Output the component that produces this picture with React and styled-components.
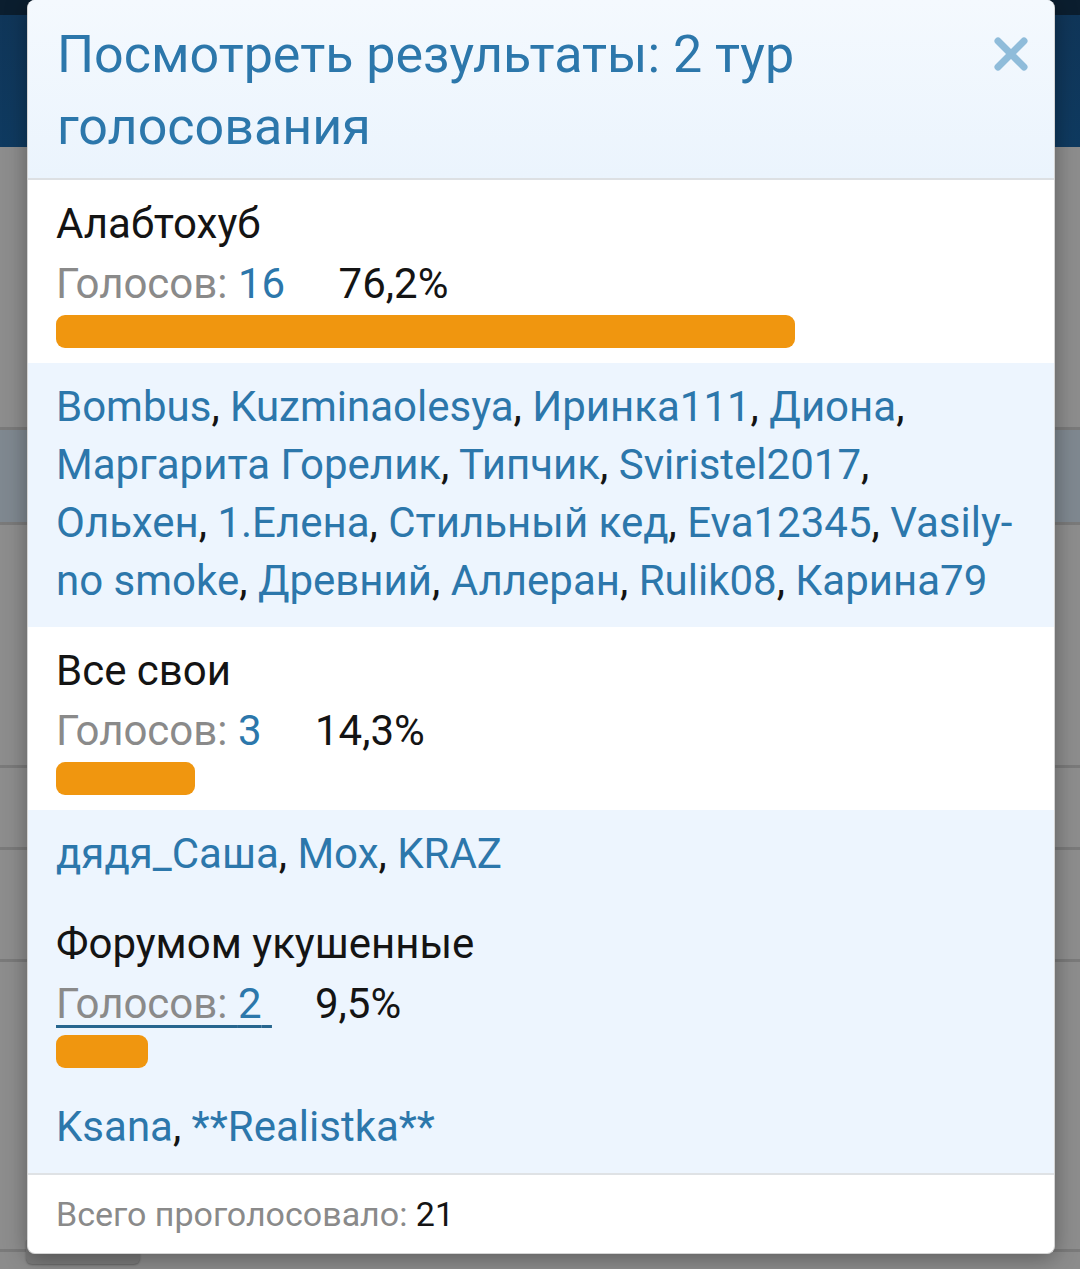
import React from 'react'
import styled, { createGlobalStyle } from 'styled-components'

const GlobalStyle = createGlobalStyle`
  html, body {
    margin: 0;
    padding: 0;
  }
  body {
    font-family: Roboto, "Noto Sans", "Liberation Sans", sans-serif;
    background: #8c8c8c;
  }
`

const options = [
  {
    title: 'Алабтохуб',
    votes: 16,
    percent: '76,2%',
    share: 76.2,
    voters: ['Bombus', 'Kuzminaolesya', 'Иринка111', 'Диона', 'Маргарита Горелик', 'Типчик', 'Sviristel2017',
      'Ольхен', '1.Елена', 'Стильный кед', 'Eva12345', 'Vasily-no smoke', 'Древний', 'Аллеран', 'Rulik08', 'Карина79'],
  },
  {
    title: 'Все свои',
    votes: 3,
    percent: '14,3%',
    share: 14.3,
    voters: ['дядя_Саша', 'Mox', 'KRAZ'],
  },
  {
    title: 'Форумом укушенные',
    votes: 2,
    percent: '9,5%',
    share: 9.5,
    voters: ['Ksana', '**Realistka**'],
    hover: true,
  },
]

export default function App() {
  return (
    <>
      <GlobalStyle />
      <Page>
        <TopBar />
        <BgRow $h={283} />
        <BgRow $h={95} $tone="#7f8890" />
        <BgRow $h={243} />
        <BgRow $h={82} />
        <BgRow $h={112} />
        <BgRow $h={290} />
        <BgButton />

        <Modal>
          <Header>
            <Title>Посмотреть результаты: 2 тур голосования</Title>
            <Close aria-label="close">
              <svg width="34" height="34" viewBox="0 0 34 34">
                <path d="M4 4 L30 30 M30 4 L4 30" stroke="#8fbcda" strokeWidth="7" strokeLinecap="round" />
              </svg>
            </Close>
          </Header>

          {options.map((o) => (
            <React.Fragment key={o.title}>
              <Option $tinted={o.hover}>
                <OptionTitle>{o.title}</OptionTitle>
                <VotesLine>
                  <Votes $hover={o.hover}>Голосов: <Count>{o.votes}</Count> </Votes>
                  <Percent>{o.percent}</Percent>
                </VotesLine>
                <Bar style={{ width: `${o.share}%` }} />
              </Option>
              <Voters>
                {o.voters.map((v, i) => (
                  <React.Fragment key={v}>
                    <Voter>{v}</Voter>
                    {i < o.voters.length - 1 ? ', ' : ''}
                  </React.Fragment>
                ))}
              </Voters>
            </React.Fragment>
          ))}

          <Footer>
            Всего проголосовало: <Total>21</Total>
          </Footer>
        </Modal>
      </Page>
    </>
  )
}

const Page = styled.div`
  position: relative;
  height: 1269px;
  overflow: hidden;
  display: flex;
  flex-direction: column;
`

const TopBar = styled.div`
  height: 147px;
  flex-shrink: 0;
  background: linear-gradient(#0b1e2f 0 15px, #103659 15px, #0f3a60 147px);
`

const BgRow = styled.div`
  height: ${(p) => p.$h}px;
  flex-shrink: 0;
  background: ${(p) => p.$tone || '#8d8d8d'};
  border-bottom: 3px solid #7a7a7a;
  box-sizing: border-box;
`

const BgButton = styled.div`
  position: absolute;
  left: 26px;
  top: 1240px;
  width: 114px;
  height: 24px;
  border-radius: 0 0 6px 6px;
  background: #7a7a7a;
  box-shadow: 0 1px 2px rgba(0, 0, 0, 0.3);
`

const Modal = styled.div`
  position: absolute;
  left: 27px;
  top: 0;
  width: 1028px;
  background: #fff;
  border: 1px solid #d4d4d4;
  border-top: none;
  border-radius: 8px;
  box-shadow: 0 4px 22px rgba(0, 0, 0, 0.35);
  overflow: hidden;
  box-sizing: border-box;
`

const Header = styled.div`
  display: flex;
  align-items: flex-start;
  justify-content: space-between;
  padding: 19px 26px 15px 29px;
  background: linear-gradient(#f4f9fe, #ebf4fd);
  border-bottom: 2px solid #dde0e3;
`

const Title = styled.h2`
  margin: 0;
  max-width: 880px;
  font-size: 52px;
  font-weight: 400;
  line-height: 72px;
  color: #2c77ab;
`

const Close = styled.button`
  border: none;
  background: none;
  padding: 0;
  margin-top: 18px;
  display: flex;
  cursor: pointer;
`

const Option = styled.div`
  padding: 14px 28px 15px;
  background: ${(p) => (p.$tinted ? '#edf5fe' : '#fff')};
`

const OptionTitle = styled.div`
  font-size: 42px;
  line-height: 60px;
  color: #141414;
`

const VotesLine = styled.div`
  font-size: 42px;
  line-height: 60px;
`

const Votes = styled.span`
  color: #8a8a8a;
  text-decoration: ${(p) => (p.$hover ? 'underline' : 'none')};
  text-decoration-color: #27668f;
  text-decoration-thickness: 3px;
  text-underline-offset: 7px;
`

const Count = styled.span`
  color: #2c77ab;
`

const Percent = styled.span`
  margin-left: 43px;
  color: #141414;
`

const Bar = styled.div`
  height: 33px;
  margin-top: 1px;
  border-radius: 9px;
  background: #f0960f;
`

const Voters = styled.div`
  padding: 15px 28px 17px;
  background: #edf5fe;
  font-size: 42px;
  line-height: 58px;
  color: #141414;
`

const Voter = styled.span`
  color: #2c77ab;
`

const Footer = styled.div`
  border-top: 2px solid #dfe2e5;
  padding: 19px 28px 19px;
  font-size: 34px;
  line-height: 40px;
  color: #8a8a8a;
`

const Total = styled.span`
  color: #141414;
`
